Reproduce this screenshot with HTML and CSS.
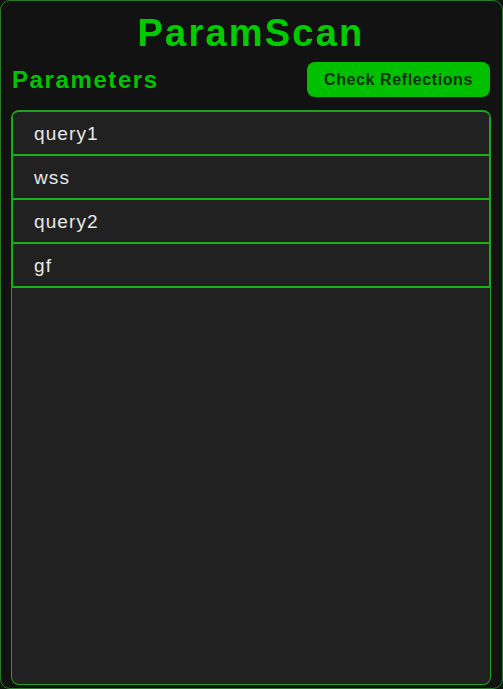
FILE: index.html
```html
<!DOCTYPE html>
<html>
<head>
<meta charset="utf-8">
<link rel="stylesheet" href="styles.css">
</head>
<body>
<div class="app">
  <h1 class="title">ParamScan</h1>
  <div class="toolbar">
    <h2 class="section">Parameters</h2>
    <button class="check-btn">Check Reflections</button>
  </div>
  <ul class="param-list">
    <li class="param">query1</li>
    <li class="param">wss</li>
    <li class="param">query2</li>
    <li class="param">gf</li>
  </ul>
</div>
</body>
</html>
```
FILE: styles.css
```css
html, body {
  margin: 0;
  padding: 0;
  background: #121212;
}
body {
  font-family: "Liberation Sans", Arial, sans-serif;
}
.app {
  box-sizing: border-box;
  width: 503px;
  height: 689px;
  border: 1px solid #2b7d2b;
  border-radius: 10px;
  background: #131212;
  padding: 0 11px 3px 10px;
  display: flex;
  flex-direction: column;
}
.title {
  margin: 11px 0 0;
  text-align: center;
  font-size: 38px;
  font-weight: bold;
  letter-spacing: 2.2px;
  color: #00cc00;
  line-height: 43px;
}
.toolbar {
  display: flex;
  align-items: center;
  justify-content: space-between;
  margin-top: 7px;
  padding-right: 1px;
}
.section {
  margin: 0 0 0 1px;
  font-size: 24px;
  font-weight: bold;
  letter-spacing: 1.6px;
  color: #00c400;
}
.check-btn {
  height: 35px;
  width: 183px;
  border: none;
  border-radius: 8px;
  background: #00c000;
  color: #123312;
  font-family: "Liberation Sans", Arial, sans-serif;
  font-size: 16px;
  font-weight: bold;
  letter-spacing: 0.6px;
  padding: 0;
}
.param-list {
  list-style: none;
  margin: 13px 0 0;
  padding: 0;
  flex: 1;
  border: 1px solid #1fa21f;
  border-top-width: 2px;
  border-radius: 8px;
  background: #212121;
  overflow: hidden;
}
.param {
  height: 42px;
  line-height: 44px;
  padding-left: 21px;
  border-bottom: 2px solid #18b018;
  border-left: 1px solid #18b018;
  border-right: 1px solid #18b018;
  color: #e8e8e8;
  font-size: 19px;
  letter-spacing: 1.1px;
}
```
